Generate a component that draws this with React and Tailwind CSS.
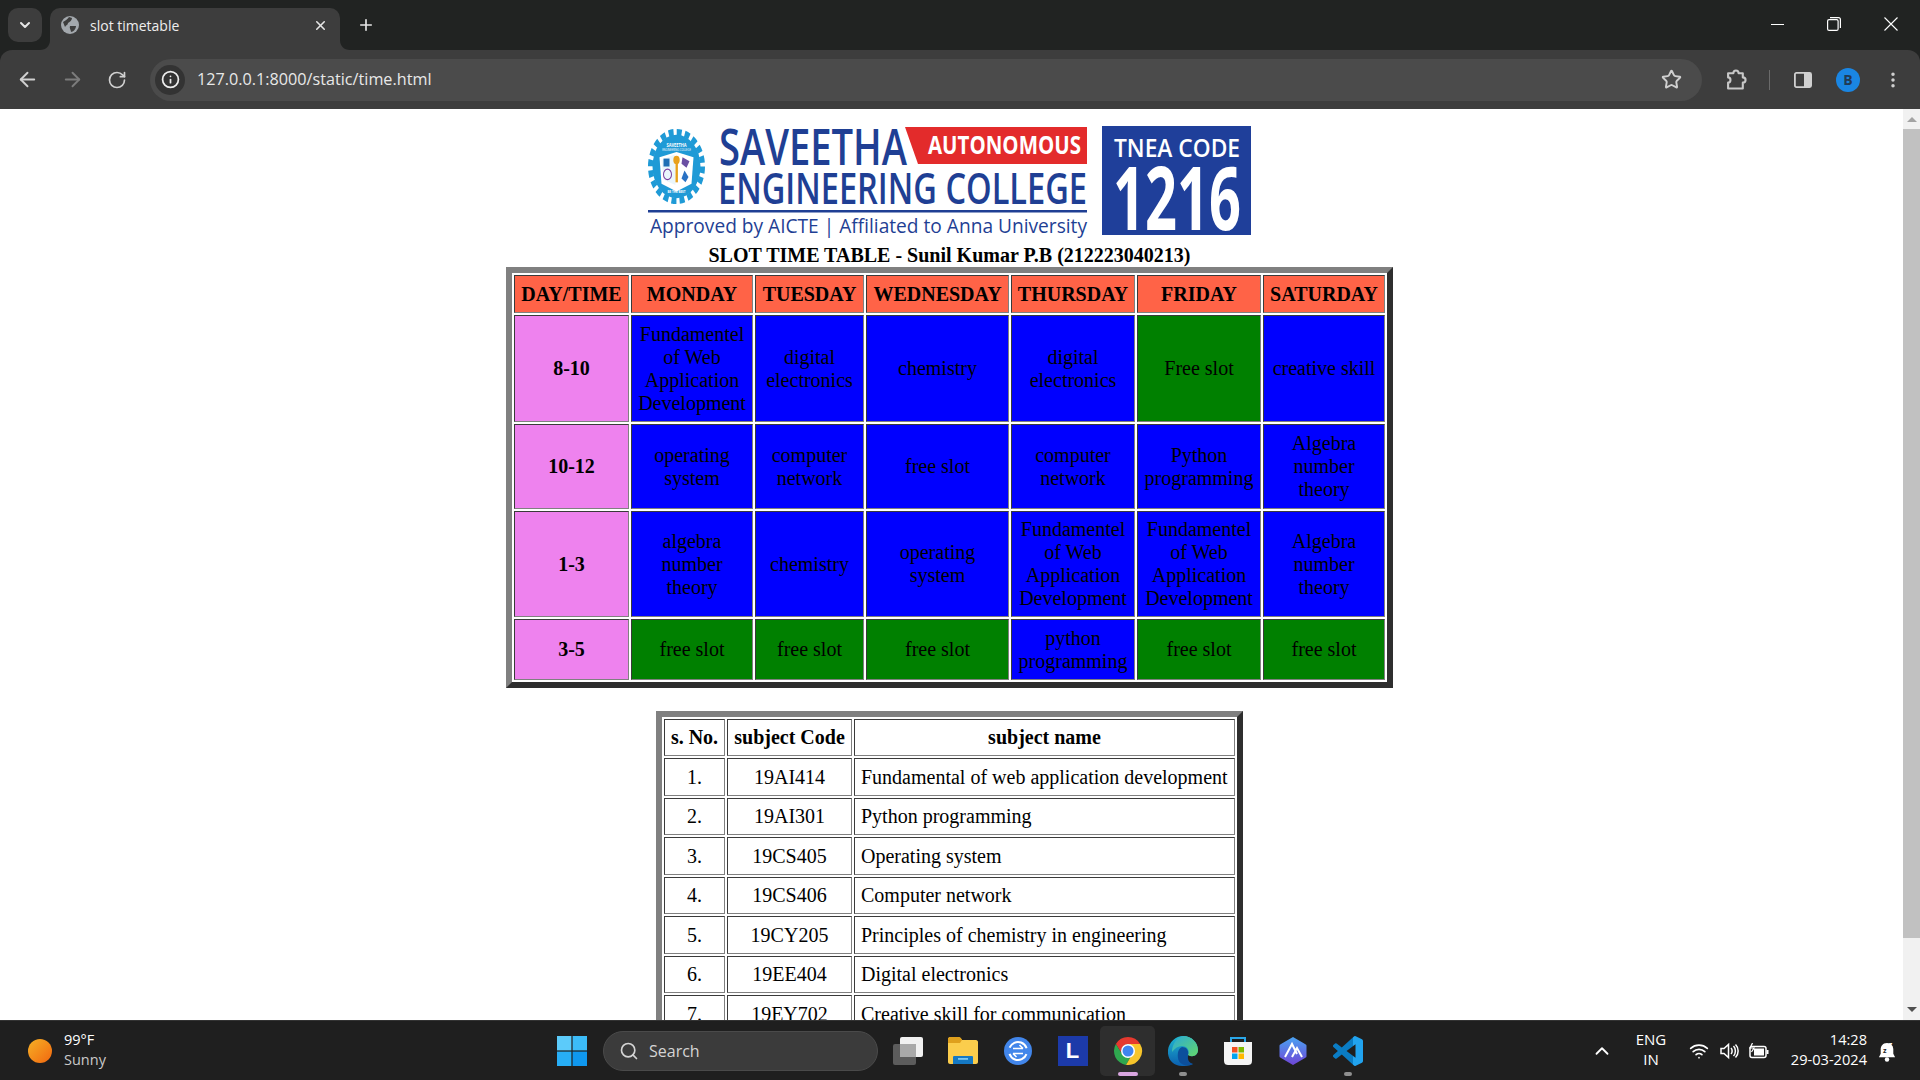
import React from 'react';
import {
  ArrowLeft, ArrowRight, RotateCw, Info, Star, MoreVertical, Plus, X, ChevronDown, Search, ChevronUp, Wifi,
} from 'lucide-react';

const BLUE = 'bg-[#0000ff]';
const GREEN = 'bg-[#008000]';

const days = ['DAY/TIME', 'MONDAY', 'TUESDAY', 'WEDNESDAY', 'THURSDAY', 'FRIDAY', 'SATURDAY'];
const colWidths = ['w-[115px]', 'w-[122px]', 'w-[109px]', 'w-[143px]', 'w-[124px]', 'w-[124px]', 'w-[122px]'];

const slots = [
  {
    time: '8-10',
    height: 'h-[107px]',
    cells: [
      ['Fundamentel of Web Application Development', BLUE],
      ['digital electronics', BLUE],
      ['chemistry', BLUE],
      ['digital electronics', BLUE],
      ['Free slot', GREEN],
      ['creative skill', BLUE],
    ],
  },
  {
    time: '10-12',
    height: 'h-[85px]',
    cells: [
      ['operating system', BLUE],
      ['computer network', BLUE],
      ['free slot', BLUE],
      ['computer network', BLUE],
      ['Python programming', BLUE],
      ['Algebra number theory', BLUE],
    ],
  },
  {
    time: '1-3',
    height: 'h-[106px]',
    cells: [
      ['algebra number theory', BLUE],
      ['chemistry', BLUE],
      ['operating system', BLUE],
      ['Fundamentel of Web Application Development', BLUE],
      ['Fundamentel of Web Application Development', BLUE],
      ['Algebra number theory', BLUE],
    ],
  },
  {
    time: '3-5',
    height: 'h-[61px]',
    cells: [
      ['free slot', GREEN],
      ['free slot', GREEN],
      ['free slot', GREEN],
      ['python programming', BLUE],
      ['free slot', GREEN],
      ['free slot', GREEN],
    ],
  },
];

const subjects = [
  ['1.', '19AI414', 'Fundamental of web application development', 'h-[38px]'],
  ['2.', '19AI301', 'Python programming', 'h-[37px]'],
  ['3.', '19CS405', 'Operating system', 'h-[38px]'],
  ['4.', '19CS406', 'Computer network', 'h-[37px]'],
  ['5.', '19CY205', 'Principles of chemistry in engineering', 'h-[38px]'],
  ['6.', '19EE404', 'Digital electronics', 'h-[37px]'],
  ['7.', '19EY702', 'Creative skill for communication', 'h-[38px]'],
];

const cellBorder = 'border border-t-[#3a3a3a] border-l-[#3a3a3a] border-r-[#808080] border-b-[#808080]';
const tableBorder = 'border-separate border-spacing-[2px] border-[6px] border-t-[#808080] border-l-[#808080] border-r-[#2e2e2e] border-b-[#2e2e2e]';

function Logo() {
  const sans = '"Open Sans", "Noto Sans", sans-serif';
  return (
    <svg viewBox="645 124 609 114" className="block h-[114px] w-[609px] shrink-0">
      {/* emblem */}
      <g transform="translate(676.5 166.5) scale(1 1.32)">
        <circle r="24" fill="#1f9ad6" />
        <circle r="26" fill="none" stroke="#1f9ad6" strokeWidth="5" strokeDasharray="5 3.17" />
        <path d="M-17 -7 L0 -11 L17 -7 L15 13 L0 19 L-15 13 Z" fill="#fff" />
        <path d="M-15 -5 L-2 -9 L-1 14 L-13 10 Z" fill="#eaf6fc" />
        <rect x="-13" y="-6" width="6" height="6" fill="#1f6fb5" />
        <circle cx="-9" cy="6" r="4" fill="none" stroke="#7a3fa0" strokeWidth="1" />
        <path d="M6 -7 L13 -4 L10 1 L5 -2 Z" fill="#6a4fa3" />
        <path d="M5 9 L8 3 L12 8 L9 12 Z" fill="#2a72c4" />
        <rect x="-1" y="-3" width="2.4" height="15" fill="#e8a11c" />
        <circle cx="0" cy="-5" r="3.2" fill="#e8a11c" />
        <text x="0" y="-15" textAnchor="middle" fontSize="4" fontWeight="700" fill="#fff" fontFamily={sans}>SAVEETHA</text>
        <text x="0" y="-11.5" textAnchor="middle" fontSize="2.6" fill="#fff" fontFamily={sans}>ENGINEERING COLLEGE</text>
        <text x="0" y="20" textAnchor="middle" fontSize="3" fontWeight="700" fill="#fff" fontFamily={sans}>BE THE BEST</text>
      </g>
      <text x="719" y="165" fontSize="51" fontWeight="600" fill="#1f3f94" fontFamily={sans} textLength="188" lengthAdjust="spacingAndGlyphs">SAVEETHA</text>
      <path d="M905 127 H1087 V164 H918 Z" fill="#e32b2b" />
      <text x="928" y="154" fontSize="25" fontWeight="700" fill="#fff" fontFamily={sans} textLength="153" lengthAdjust="spacingAndGlyphs">AUTONOMOUS</text>
      <text x="718" y="204" fontSize="44" fontWeight="600" fill="#1f3f94" fontFamily={sans} textLength="369" lengthAdjust="spacingAndGlyphs">ENGINEERING COLLEGE</text>
      <rect x="648" y="210" width="439" height="2.5" fill="#1f3f94" />
      <text x="650" y="233" fontSize="20" fill="#1f3f94" fontFamily={sans} textLength="437" lengthAdjust="spacingAndGlyphs">Approved by AICTE  |  Affiliated to Anna University</text>
      <rect x="1102" y="126" width="149" height="109" fill="#1f3f9a" />
      <text x="1114" y="157" fontSize="25" fontWeight="600" fill="#fff" fontFamily={sans} textLength="126" lengthAdjust="spacingAndGlyphs">TNEA CODE</text>
      <text x="1113" y="230" fontSize="88" fontWeight="700" fill="#fff" fontFamily={sans} textLength="128" lengthAdjust="spacingAndGlyphs">1216</text>
    </svg>
  );
}

function TabFlare({ side }) {
  const d = side === 'left' ? 'M10 0 V10 H0 C6 10 10 6 10 0 Z' : 'M0 0 V10 H10 C4 10 0 6 0 0 Z';
  return (
    <svg viewBox="0 0 10 10" className={`absolute bottom-0 h-[10px] w-[10px] ${side === 'left' ? 'left-[-10px]' : 'right-[-10px]'}`}>
      <path d={d} fill="#3d3d3d" />
    </svg>
  );
}

function TitleBar() {
  return (
    <div className="flex h-[50px] bg-[#212322] text-[#e6e6e6]">
      <div className="ml-[8px] mt-[8px] flex h-[34px] w-[34px] items-center justify-center rounded-[10px] bg-[#3d3d3d]">
        <ChevronDown size={16} strokeWidth={3} />
      </div>
      <div className="relative ml-[8px] mt-[8px] flex h-[42px] w-[290px] items-center rounded-t-[10px] bg-[#3d3d3d] pb-[8px] pl-[11px] pr-[12px]">
        <TabFlare side="left" />
        <TabFlare side="right" />
        <svg viewBox="0 0 18 18" className="h-[18px] w-[18px] shrink-0">
          <circle cx="9" cy="9" r="9" fill="#a3a8ad" />
          <path d="M2 6 C5 4 7 3 8 1 L11 2 C11 4 9 6 7 7 C7 9 5 9 4 11 Z M9 10 L15 10 C15 13 12 16 10 16 C10 14 8 12 9 10 Z" fill="#3d3d3d" />
        </svg>
        <span className="ml-[11px] flex-1 text-[14px] text-[#eeeeee]">slot timetable</span>
        <X size={15} strokeWidth={2.5} />
      </div>
      <div className="ml-[15px] mt-[14px] flex h-[22px] w-[22px] items-center justify-center">
        <Plus size={18} strokeWidth={2.2} />
      </div>
      <div className="ml-auto flex items-start text-white">
        <div className="flex h-[48px] w-[56px] items-center justify-center pr-[2px]">
          <div className="h-[1px] w-[13px] bg-white" />
        </div>
        <div className="flex h-[48px] w-[56px] items-center justify-center">
          <svg viewBox="0 0 14 14" className="h-[14px] w-[14px]" fill="none" stroke="currentColor" strokeWidth="1.2">
            <rect x="0.6" y="2.6" width="10.5" height="10.8" rx="1.5" />
            <path d="M3 0.6 H11.5 C12.6 0.6 13.4 1.4 13.4 2.5 V11" />
          </svg>
        </div>
        <div className="flex h-[48px] w-[58px] items-center justify-center">
          <svg viewBox="0 0 14 14" className="h-[14px] w-[14px]" fill="none" stroke="currentColor" strokeWidth="1.1">
            <path d="M0.5 0.5 L13.5 13.5 M13.5 0.5 L0.5 13.5" />
          </svg>
        </div>
      </div>
    </div>
  );
}

function Toolbar() {
  return (
    <div className="flex h-[59px] items-center rounded-t-[12px] bg-[#3d3d3d] text-[#d0d0d0]">
      <div className="flex w-[150px] items-center pl-[16px]">
        <ArrowLeft size={23} strokeWidth={2} />
        <ArrowRight size={23} strokeWidth={2} className="ml-[22px] text-[#7c7c7c]" />
        <RotateCw size={20} strokeWidth={2} className="ml-[23px]" />
      </div>
      <div className="flex h-[42px] w-[1552px] items-center rounded-full bg-[#4b4b4b] pl-[5px] pr-[20px]">
        <div className="flex h-[30px] w-[30px] items-center justify-center rounded-full bg-[#333333] text-[#ececec]">
          <Info size={19} strokeWidth={2.2} />
        </div>
        <span className="ml-[12px] flex-1 text-[16.2px] text-[#e8e8e8]">127.0.0.1:8000/static/time.html</span>
        <Star size={21} strokeWidth={2.2} />
      </div>
      <div className="flex flex-1 items-center">
        <svg viewBox="0 0 20 20" className="ml-[24px] h-[21px] w-[21px]" fill="none" stroke="#c8c8c8" strokeWidth="2" strokeLinejoin="round">
          <path d="M2 4 H7 C7 0.5 12 0.5 12 4 H16 V8 C19.5 8 19.5 13 16 13 V18.5 H2 V13 C5 13 5 8 2 8 Z" />
        </svg>
        <div className="ml-[22px] h-[20px] w-[1px] bg-[#6a6a6a]" />
        <svg viewBox="0 0 18 18" className="ml-[24px] h-[18px] w-[18px]">
          <rect x="0.9" y="1.9" width="16.2" height="14.2" rx="1.5" fill="none" stroke="#d0d0d0" strokeWidth="1.8" />
          <rect x="10" y="2" width="7" height="14" fill="#d0d0d0" />
        </svg>
        <div className="ml-[24px] flex h-[24px] w-[24px] items-center justify-center rounded-full bg-[#1a86e3] text-[14px] font-bold text-[#213a55]">B</div>
        <MoreVertical size={20} strokeWidth={2.2} className="ml-[23px]" />
      </div>
    </div>
  );
}

function Scrollbar() {
  return (
    <div className="flex w-[17px] shrink-0 flex-col items-center bg-[#f1f1f1]">
      <div className="flex h-[20px] w-full items-center justify-center">
        <div className="h-0 w-0 border-x-[5px] border-b-[5px] border-x-transparent border-b-[#a3a3a3]" />
      </div>
      <div className="mx-auto h-[809px] w-full bg-[#c1c1c1]" />
      <div className="flex flex-1 items-end justify-center pb-[8px]">
        <div className="h-0 w-0 border-x-[5px] border-t-[5px] border-x-transparent border-t-[#505050]" />
      </div>
    </div>
  );
}

function Page() {
  return (
    <div className="flex h-[911px] shrink-0 overflow-hidden bg-white text-[20px] leading-[23px] text-black font-['Liberation_Serif',serif]">
      <div className="flex w-[1899px] shrink-0 flex-col items-center pt-[15px]">
        <Logo />
        <div className="mt-[6px] h-[23px] shrink-0 font-bold">SLOT TIME TABLE - Sunil Kumar P.B (212223040213)</div>
        <table className={`w-[887px] shrink-0 table-fixed ${tableBorder}`}>
          <thead>
            <tr className="h-[38px]">
              {days.map((day, i) => (
                <th key={day} className={`${colWidths[i]} bg-[#ff6347] p-0 text-center font-bold ${cellBorder}`}>{day}</th>
              ))}
            </tr>
          </thead>
          <tbody>
            {slots.map((slot) => (
              <tr key={slot.time} className={slot.height}>
                <td className={`bg-[#ee82ee] p-0 text-center font-bold ${cellBorder}`}>{slot.time}</td>
                {slot.cells.map(([name, color], i) => (
                  <td key={i} className={`${color} px-[4px] py-0 text-center ${cellBorder}`}>{name}</td>
                ))}
              </tr>
            ))}
          </tbody>
        </table>
        <table className={`mt-[23px] w-[587px] shrink-0 table-fixed ${tableBorder}`}>
          <thead>
            <tr className="h-[37px]">
              <th className={`w-[61px] p-0 text-center font-bold ${cellBorder}`}>s. No.</th>
              <th className={`w-[125px] p-0 text-center font-bold ${cellBorder}`}>subject Code</th>
              <th className={`w-[381px] p-0 text-center font-bold ${cellBorder}`}>subject name</th>
            </tr>
          </thead>
          <tbody>
            {subjects.map(([no, code, name, height]) => (
              <tr key={code} className={height}>
                <td className={`p-0 text-center ${cellBorder}`}>{no}</td>
                <td className={`p-0 text-center ${cellBorder}`}>{code}</td>
                <td className={`px-[6px] py-0 text-left ${cellBorder}`}>{name}</td>
              </tr>
            ))}
          </tbody>
        </table>
      </div>
      <div className="w-[4px] shrink-0" />
      <Scrollbar />
    </div>
  );
}

function TaskIcon({ children, active, dot }) {
  return (
    <div className={`relative flex h-[50px] w-[55px] items-center justify-center rounded-[5px] ${active ? 'bg-[#2e2e2e]' : ''}`}>
      {children}
      {dot && <div className={`absolute bottom-0 h-[4px] rounded-full ${active ? 'w-[20px] bg-[#d9a6e0]' : 'w-[8px] bg-[#8f8f8f]'}`} />}
    </div>
  );
}

function Taskbar() {
  return (
    <div className="flex h-[60px] shrink-0 items-center border-t border-[#333333] bg-[#1f1f1f] text-white font-['Open_Sans',sans-serif]">
      <div className="ml-[28px] h-[24px] w-[24px] rounded-full bg-gradient-to-br from-[#f5b025] to-[#f0650f]" />
      <div className="ml-[12px] w-[80px] pb-[2px] text-[14.5px] leading-[20px]">
        <div>99°F</div>
        <div className="text-[#c9c9c9]">Sunny</div>
      </div>
      <svg viewBox="0 0 30 30" className="ml-[413px] h-[30px] w-[30px]">
        <rect x="0" y="0" width="14.4" height="14.4" fill="#5ccbfa" />
        <rect x="15.6" y="0" width="14.4" height="14.4" fill="#3cbcf8" />
        <rect x="0" y="15.6" width="14.4" height="14.4" fill="#27aef6" />
        <rect x="15.6" y="15.6" width="14.4" height="14.4" fill="#0f98ef" />
      </svg>
      <div className="ml-[16px] flex h-[40px] w-[275px] items-center rounded-full border border-[#4a4a4a] bg-[#3b3b3b] pl-[15px] text-[#d4d4d4]">
        <Search size={20} strokeWidth={2} />
        <span className="ml-[10px] text-[16px]">Search</span>
      </div>
      <div className="ml-[2px] flex items-center">
        <TaskIcon>
          <svg viewBox="0 0 30 28" className="h-[28px] w-[30px]">
            <rect x="0" y="7" width="23" height="21" rx="2" fill="#5c5c5c" />
            <rect x="7" y="0" width="23" height="20" rx="2" fill="#f1f1f1" />
            <rect x="7" y="7" width="16" height="13" fill="#a9a9a9" />
          </svg>
        </TaskIcon>
        <TaskIcon>
          <svg viewBox="0 0 30 27" className="h-[27px] w-[30px]">
            <path d="M0 2 C0 1 1 0 2 0 H10 C12 0 13 1 14 3 H28 C29 3 30 4 30 5 V25 C30 26 29 27 28 27 H2 C1 27 0 26 0 25 Z" fill="#fbcd4c" />
            <path d="M0 2 C0 1 1 0 2 0 H10 C12 0 13 1 14 3 L12 6 H0 Z" fill="#dfa01d" />
            <path d="M5 20 C5 19 6 19 6 19 H24 C25 19 25 20 25 20 V27 H5 Z" fill="#1579c4" />
            <rect x="10" y="21" width="10" height="1.8" fill="#7cc7f2" />
          </svg>
        </TaskIcon>
        <TaskIcon>
          <svg viewBox="0 0 28 28" className="h-[28px] w-[28px]" fill="none">
            <circle cx="14" cy="14" r="14" fill="#4286ea" />
            <circle cx="14" cy="14" r="9" stroke="#fff" strokeWidth="2" strokeDasharray="22 6.3" transform="rotate(20 14 14)" />
            <path d="M9 11.5 H19 M15.5 8 L19 11.5 M19 16.5 H9 M12.5 20 L9 16.5" stroke="#fff" strokeWidth="1.6" />
          </svg>
        </TaskIcon>
        <TaskIcon>
          <div className="flex h-[30px] w-[30px] items-center justify-center bg-[#1c3aa9] font-['Liberation_Sans',sans-serif] text-[22px] font-bold text-white">L</div>
        </TaskIcon>
        <TaskIcon active dot>
          <svg viewBox="0 0 30 30" className="h-[30px] w-[30px]">
            <path d="M15 1 A14 14 0 0 1 27.1 8 H15 Z M15 1 A14 14 0 0 0 2.9 8 L9 18 A7 7 0 0 1 15 8 Z" fill="#e5392f" />
            <path d="M2.9 8 A14 14 0 0 0 13 28.9 L19 18.5 A7 7 0 0 1 9 18 Z" fill="#2fa84f" />
            <path d="M27.1 8 A14 14 0 0 1 13 28.9 L19 18.5 A7 7 0 0 0 15 8 Z" fill="#f7c52b" />
            <circle cx="15" cy="15" r="7" fill="#fff" />
            <circle cx="15" cy="15" r="5.5" fill="#3f85ee" />
          </svg>
        </TaskIcon>
        <TaskIcon dot>
          <svg viewBox="0 0 30 30" className="h-[30px] w-[30px]">
            <defs>
              <linearGradient id="edgeBlue" x1="0" y1="0" x2="0" y2="1">
                <stop offset="0" stopColor="#1fb8d0" />
                <stop offset="1" stopColor="#0b5fb0" />
              </linearGradient>
              <linearGradient id="edgeGreen" x1="0" y1="0" x2="1" y2="1">
                <stop offset="0" stopColor="#2aa9d8" />
                <stop offset="1" stopColor="#64d86a" />
              </linearGradient>
            </defs>
            <path d="M0 14 C1 6 8 0 15 0 C24 0 30 7 30 14 C30 19 25 22 20 19 C18 24 21 28 25 28 C21 30 17 30 14 30 C5 30 -1 23 0 14 Z" fill="url(#edgeBlue)" />
            <path d="M15 0 C24 0 30 7 30 14 C30 19 25 22 20 19 C22 14 19 10 14 10 C10 10 7 12 4 16 C4 8 9 1 15 0 Z" fill="url(#edgeGreen)" />
            <path d="M14 11 C19 11 21 15 20 19 C19 23 21 27 25 28 C19 31 11 29 10 22 C9 16 11 12 14 11 Z" fill="#0c4f9c" />
          </svg>
        </TaskIcon>
        <TaskIcon>
          <svg viewBox="0 0 30 30" className="h-[30px] w-[30px]">
            <path d="M8 7 V2 H22 V7" fill="none" stroke="#2aa7e8" strokeWidth="2" />
            <path d="M1 6 H29 V25 C29 28 27 29 25 29 H5 C3 29 1 28 1 25 Z" fill="#f4f4f4" />
            <rect x="9" y="11" width="5.5" height="5.5" fill="#f25022" />
            <rect x="15.5" y="11" width="5.5" height="5.5" fill="#7fba00" />
            <rect x="9" y="17.5" width="5.5" height="5.5" fill="#00a4ef" />
            <rect x="15.5" y="17.5" width="5.5" height="5.5" fill="#ffb900" />
          </svg>
        </TaskIcon>
        <TaskIcon>
          <svg viewBox="0 0 28 30" className="h-[30px] w-[28px]" fill="none">
            <defs>
              <linearGradient id="hexBlue" x1="0" y1="0" x2="0" y2="1">
                <stop offset="0" stopColor="#4aa3f2" />
                <stop offset="1" stopColor="#6f45d6" />
              </linearGradient>
            </defs>
            <path d="M14 1 L26 8 C27 8.5 27.5 9 27.5 10 V20 C27.5 21 27 21.5 26 22 L14 29 L2 22 C1 21.5 0.5 21 0.5 20 V10 C0.5 9 1 8.5 2 8 Z" fill="url(#hexBlue)" />
            <path d="M6 21 L13 8 L18 18 M13 21 L18 12 L23 21" stroke="#fff" strokeWidth="2" />
          </svg>
        </TaskIcon>
        <TaskIcon dot>
          <svg viewBox="0 0 24 24" className="h-[30px] w-[30px]">
            <defs>
              <linearGradient id="codeBlue" x1="0" y1="0" x2="1" y2="0">
                <stop offset="0.68" stopColor="#0a7cc4" />
                <stop offset="0.68" stopColor="#21a3ef" />
              </linearGradient>
            </defs>
            <path d="M23.15 2.587L18.21.21a1.494 1.494 0 0 0-1.705.29l-9.46 8.63-4.12-3.128a.999.999 0 0 0-1.276.057L.327 7.261A1 1 0 0 0 .326 8.74L3.899 12 .326 15.26a1 1 0 0 0 .001 1.479L1.65 17.94a.999.999 0 0 0 1.276.057l4.12-3.128 9.46 8.63a1.492 1.492 0 0 0 1.704.29l4.942-2.377A1.5 1.5 0 0 0 24 20.06V3.939a1.5 1.5 0 0 0-.85-1.352zm-5.146 14.861L10.826 12l7.178-5.448v10.896z" fill="url(#codeBlue)" />
          </svg>
        </TaskIcon>
      </div>
      <div className="ml-auto flex items-center pr-[24px]">
        <ChevronUp size={22} strokeWidth={2} />
        <div className="ml-[18px] w-[40px] pb-[3px] text-center text-[15px] leading-[20px]">
          <div>ENG</div>
          <div>IN</div>
        </div>
        <Wifi size={20} strokeWidth={2} className="ml-[17.5px]" />
        <svg viewBox="0 0 20 20" className="ml-[10px] h-[20px] w-[20px]" fill="none" stroke="#fff" strokeWidth="1.5">
          <path d="M2 7.5 H5 L9.5 3.5 V16.5 L5 12.5 H2 Z" />
          <path d="M12 7 C13.5 8.5 13.5 11.5 12 13 M14.5 5 C17 7.5 17 12.5 14.5 15 M16.5 3.5 C20 7 20 13 16.5 16.5" />
        </svg>
        <svg viewBox="0 0 20 16" className="ml-[10px] h-[16px] w-[20px]" fill="none" stroke="#fff" strokeWidth="1.5">
          <rect x="1" y="3.5" width="16" height="11" rx="2" />
          <rect x="17.5" y="7" width="2" height="4" fill="#fff" stroke="none" />
          <rect x="5" y="5.5" width="10" height="7" fill="#fff" stroke="none" />
          <path d="M3.5 0 L1 5 H5 L2.5 9" strokeWidth="1.2" />
        </svg>
        <div className="ml-[10.5px] w-[88px] pb-[4px] text-right text-[14.6px] leading-[20px]">
          <div>14:28</div>
          <div>29-03-2024</div>
        </div>
        <svg viewBox="0 0 20 24" className="ml-[11px] h-[22px] w-[18px]" fill="#fff">
          <path d="M10 3 C5 3 3 7 3 10 V15 L1 19 H19 L17 15 V10 C17 7 15 3 10 3 Z" />
          <circle cx="10" cy="21.5" r="2.5" />
          <text x="5.5" y="14" fontSize="8" fontWeight="700" fill="#1f1f1f">z</text>
          <text x="12" y="8" fontSize="8" fontWeight="700" fill="#fff">z</text>
        </svg>
      </div>
    </div>
  );
}

export default function App() {
  return (
    <div className="flex h-[1080px] w-[1920px] flex-col overflow-hidden bg-[#212322] font-['Open_Sans',sans-serif]">
      <TitleBar />
      <Toolbar />
      <Page />
      <Taskbar />
    </div>
  );
}
